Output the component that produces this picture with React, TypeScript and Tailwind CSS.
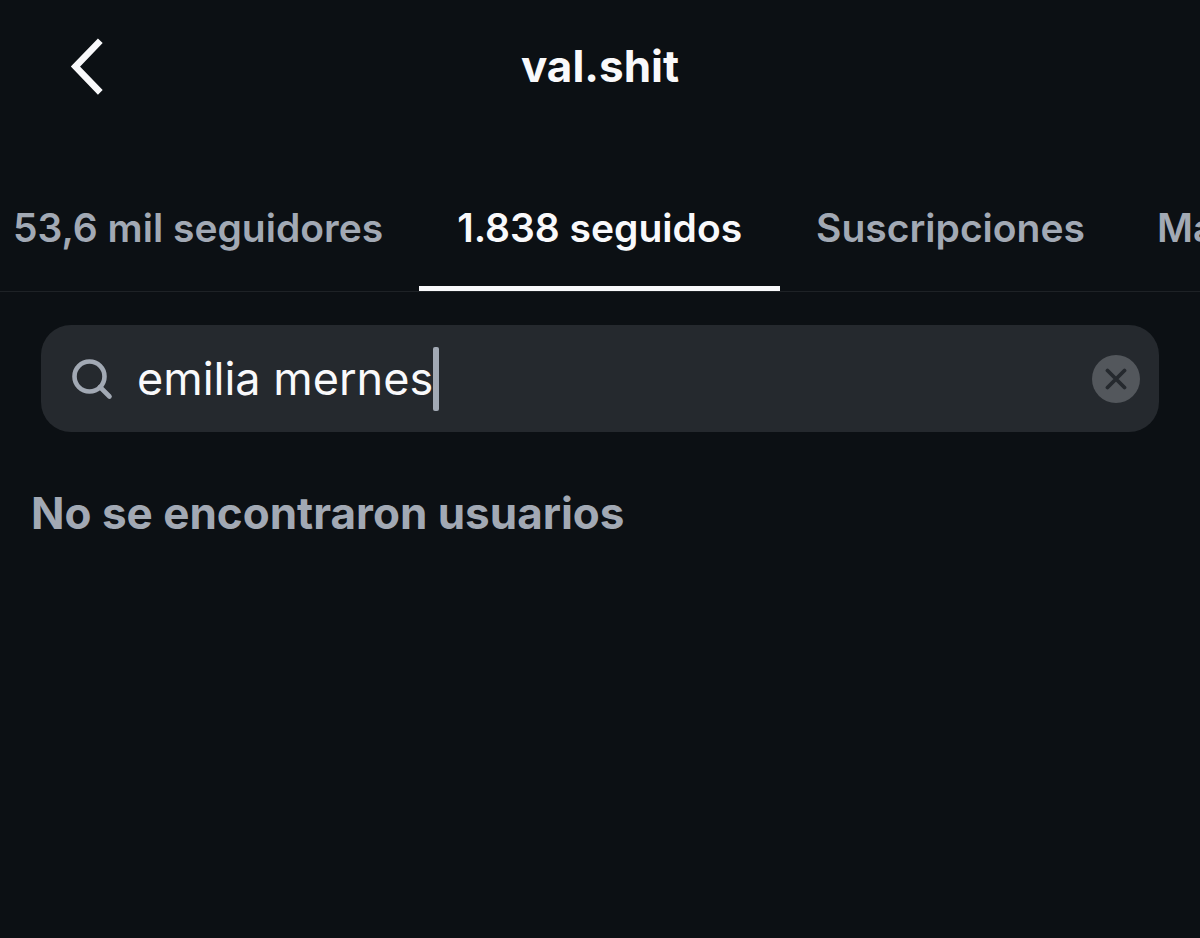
import { useState } from 'react';

const tabs = [
  { id: 'followers', label: '53,6 mil seguidores' },
  { id: 'following', label: '1.838 seguidos' },
  { id: 'subscriptions', label: 'Suscripciones' },
  { id: 'more', label: 'Marcados' },
];

function Header() {
  return (
    <header className="grid h-[132px] grid-cols-[1fr_auto_1fr] items-center px-[68px]">
      <button type="button" aria-label="Volver" className="justify-self-start">
        <svg viewBox="0 0 36 60" className="h-[60px] w-9" fill="none" stroke="currentColor" strokeWidth="6.6">
          <path d="M32.3 4.8 7.4 30.6l24.9 25.8" />
        </svg>
      </button>
      <h1 className="text-[44px] leading-[52px] font-bold">val.shit</h1>
    </header>
  );
}

export default function App() {
  const [active, setActive] = useState('following');
  const [query, setQuery] = useState('emilia mernes');

  return (
    <main className="min-h-screen overflow-hidden bg-[#0c1014] font-[Inter,sans-serif] text-[#f9f9fb]">
      <Header />
      <nav className="mt-8 flex overflow-hidden border-b border-[#1e2226]">
        {tabs.map((tab) => (
          <button
            key={tab.id}
            type="button"
            onClick={() => setActive(tab.id)}
            className={
              active === tab.id
                ? 'h-[127px] shrink-0 border-b-[5px] border-[#f9f9fb] px-[38px] pt-1.5 text-[39px] font-semibold whitespace-nowrap'
                : 'h-[127px] shrink-0 border-b-[5px] border-transparent px-9 pt-1.5 text-[39px] font-semibold whitespace-nowrap text-[#a2a9b4] first:pl-[13px]'
            }
          >
            {tab.label}
          </button>
        ))}
      </nav>
      <div className="mx-[41px] mt-[33px] flex h-[107px] items-center rounded-[30px] bg-[#25292e] pr-[19px] pl-[30px]">
        <svg viewBox="0 0 42 42" className="mr-6 size-[42px] shrink-0 text-[#a2a9b4]" fill="none" stroke="currentColor" strokeWidth="4.6">
          <circle cx="18.5" cy="18.5" r="15" />
          <path d="m29 29 9.5 9.5" strokeLinecap="round" />
        </svg>
        <div className="flex min-w-0 flex-1 items-center">
          <input
            type="text"
            aria-label="Buscar"
            value={query}
            onChange={(e) => setQuery(e.target.value)}
            className="field-sizing-content max-w-full text-[45px] leading-[64px] caret-transparent outline-none"
          />
          <span className="h-16 w-[6px] shrink-0 rounded-xs bg-[#a2a9b4]" />
        </div>
        <button
          type="button"
          aria-label="Borrar"
          onClick={() => setQuery('')}
          className="flex size-12 shrink-0 items-center justify-center rounded-full bg-[#53575c] text-[#25292e]"
        >
          <svg viewBox="0 0 22 22" className="size-[22px]" fill="none" stroke="currentColor" strokeWidth="3.8" strokeLinecap="round">
            <path d="m2.5 2.5 17 17M19.5 2.5l-17 17" />
          </svg>
        </button>
      </div>
      <p className="mt-[53px] px-[31px] text-[44px] leading-[56px] font-bold text-[#a2a9b4]">No se encontraron usuarios</p>
    </main>
  );
}
